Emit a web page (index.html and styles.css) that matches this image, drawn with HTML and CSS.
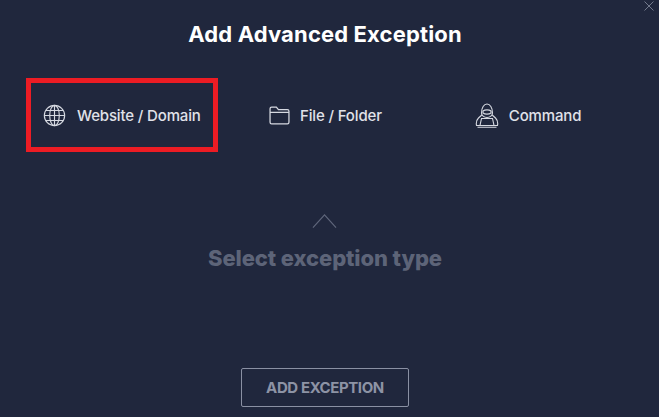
FILE: index.html
```html
<!DOCTYPE html>
<html lang="en">
<head>
<meta charset="utf-8">
<title>Add Advanced Exception</title>
<link rel="stylesheet" href="styles.css">
</head>
<body>
<main class="dialog">
  <svg class="close" viewBox="0 0 10 10" aria-hidden="true"><path d="M0.5 0.5L9.5 9.5M9.5 0.5L0.5 9.5"/></svg>
  <h1 class="title">Add Advanced Exception</h1>
  <div class="tabs">
    <div class="tab tab-web">
      <svg class="icon icon-globe" viewBox="0 0 24 24" aria-hidden="true"><circle cx="12" cy="12" r="10.6"/><ellipse cx="12" cy="12" rx="5" ry="10.6"/><path d="M12 1.4V22.6M1.4 12H22.6M3 6.8H21M3 17.2H21"/></svg>
      <span>Website / Domain</span>
    </div>
    <div class="tab tab-file">
      <svg class="icon icon-folder" viewBox="0 0 20 18" aria-hidden="true"><path d="M1 15.500V2.500A1.500 1.500 0 0 1 2.500 1H7L9 3.400H17.500A1.500 1.500 0 0 1 19 4.900V15.500A1.500 1.500 0 0 1 17.500 17H2.500A1.500 1.500 0 0 1 1 15.500ZM1 6H19"/></svg>
      <span>File / Folder</span>
    </div>
    <div class="tab tab-cmd">
      <svg class="icon icon-hacker" viewBox="0 0 24 25" aria-hidden="true"><path d="M6.500 10C6.500 4.500 9 1 12 1S17.500 4.500 17.500 10C17.500 12.500 15 14.500 12 14.500S6.500 12.500 6.500 10ZM8 8C10 6.500 14 6.500 16 8V10C14 11.500 10 11.500 8 10ZM6.800 12L3.500 15C1.500 17 1 20 1.500 22.500H5M17.200 12L20.500 15C22.500 17 23 20 22.500 22.500H19M6.500 15.500H17.500L19 22.500H5ZM2.500 24.200H21.500"/></svg>
      <span>Command</span>
    </div>
  </div>
  <div class="hint">
    <svg class="chevron" viewBox="0 0 26 16" aria-hidden="true"><path d="M1 15L13 1.500L25 15"/></svg>
    <p class="hint-text">Select exception type</p>
  </div>
  <button class="add" type="button">ADD EXCEPTION</button>
</main>
</body>
</html>
```
FILE: styles.css
```css
* { box-sizing: border-box; }
html, body { margin: 0; height: 100%; }
body { background: #20273d; font-family: "Inter", "Liberation Sans", sans-serif; overflow: hidden; }
.dialog { position: relative; height: 417px; padding-right: 9px; display: flex; flex-direction: column; align-items: center; }
.close { position: absolute; top: 1px; right: 5px; width: 10px; height: 10px; fill: none; stroke: #7d8396; stroke-width: 0.9; }
.title { margin: 22px 0 0; height: 25px; line-height: 25px; font-size: 22px; font-weight: 700; color: #fff; letter-spacing: 0.15px; }
.tabs { align-self: flex-start; margin: 31px 0 0 26px; display: flex; align-items: center; }
.tab { display: flex; align-items: center; color: #e0e2e9; font-size: 15px; font-weight: 500; letter-spacing: -0.15px; }
.tab-web { width: 192px; height: 74px; border: 5px solid #ed1c24; padding: 0 0 0 12px; gap: 11px; }
.tab-file { margin-left: 51px; gap: 10px; }
.tab-cmd { margin-left: 93px; gap: 10px; }
.icon { display: block; fill: none; stroke: #d6d9e1; stroke-width: 1.2; flex: none; }
.icon-globe { width: 23px; height: 23px; }
.icon-folder { width: 21px; height: 19px; }
.icon-hacker { width: 24px; height: 25px; stroke-width: 1.1; }
.hint { margin-top: 61px; display: flex; flex-direction: column; align-items: center; }
.chevron { display: block; width: 25px; height: 16px; fill: none; stroke: #5f667b; stroke-width: 1.2; }
.hint-text { margin: 16px 0 0; height: 26px; line-height: 26px; font-size: 22px; font-weight: 800; color: #5d6478; letter-spacing: -0.1px; }
.add { margin-top: 97px; width: 168px; height: 39px; background: transparent; border: 1px solid #8a90a3; border-radius: 2px; color: #8d93a5; font-family: "Inter", sans-serif; font-size: 15px; font-weight: 700; letter-spacing: -0.4px; padding: 0; }
```
